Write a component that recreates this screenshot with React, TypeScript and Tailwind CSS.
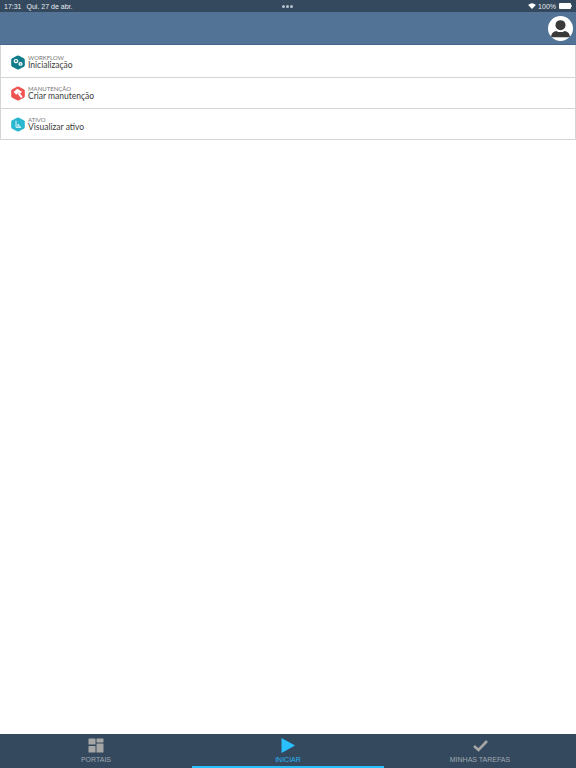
import React from 'react';

const Hex = ({ color, children }: { color: string; children: React.ReactNode }) => (
  <svg width="14" height="15" viewBox="0 0 14 16" preserveAspectRatio="none" className="shrink-0">
    <path d="M6 0.7 Q7 0.2 8 0.7 L12.8 3.4 Q13.8 4 13.8 5 V11 Q13.8 12 12.8 12.6 L8 15.3 Q7 15.8 6 15.3 L1.2 12.6 Q0.2 12 0.2 11 V5 Q0.2 4 1.2 3.4 Z" fill={color} />
    {children}
  </svg>
);

const rows = [
  {
    label: 'WORKFLOW',
    title: 'Inicialização',
    color: '#0f7c8a',
    height: 'h-[33px] pt-[2px]',
    glyph: (
      <g fill="none" stroke="#fff" strokeWidth="1.3">
        <circle cx="5" cy="6.5" r="1.7" />
        <circle cx="9.5" cy="9.5" r="1.4" />
      </g>
    ),
  },
  {
    label: 'MANUTENÇÃO',
    title: 'Criar manutenção',
    color: '#ef5350',
    height: 'h-[31px]',
    glyph: (
      <g fill="#fff">
        <path d="M2.6 6.4 L6.2 3 L11 6.2 L9.6 8 L7.6 6.8 L5.2 9.2 Z" />
        <path d="M6.6 8.2 L8.2 6.9 L11.6 11.4 L10 12.8 Z" />
      </g>
    ),
  },
  {
    label: 'ATIVO',
    title: 'Visualizar ativo',
    color: '#29b6cf',
    height: 'h-[31px]',
    glyph: (
      <g fill="none" stroke="#e6f7fa" strokeWidth="1">
        <path d="M5 4 V11 H10" />
        <path d="M7 11 V7.5 L9.5 11" />
      </g>
    ),
  },
];

export default function App() {
  return (
    <div className="flex flex-col h-[768px] w-[576px] bg-white font-['Lato',sans-serif] overflow-hidden">
      {/* Status bar */}
      <div className="h-[12px] bg-[#34495e] flex items-center justify-between pl-[4px] pr-[4px] text-[#e8ecf0] text-[7px] font-['Liberation_Sans',sans-serif] leading-none relative">
        <div className="flex gap-[5px]">
          <span>17:31</span>
          <span>Qui. 27 de abr.</span>
        </div>
        <div className="absolute left-[282px] top-[5px] flex gap-[1.5px]">
          <span className="w-[2.5px] h-[2.5px] rounded-full bg-[#b8c2cc]" />
          <span className="w-[2.5px] h-[2.5px] rounded-full bg-[#b8c2cc]" />
          <span className="w-[2.5px] h-[2.5px] rounded-full bg-[#b8c2cc]" />
        </div>
        <div className="flex items-center">
          <svg width="8" height="6" viewBox="0 0 18 14">
            <path d="M9 14 L0 4.5 Q9 -3 18 4.5 Z" fill="#fff" />
          </svg>
          <span className="ml-[2px]">100%</span>
          <span className="w-[12px] h-[6px] bg-white rounded-[1px] ml-[3px]" />
          <span className="w-[1px] h-[2px] bg-white/70" />
        </div>
      </div>

      {/* Header */}
      <div className="h-[33px] bg-[#527395] flex items-start justify-end pr-[3px] pt-[4px] border-b border-[#46658a]">
        <div className="w-[25px] h-[25px] rounded-full bg-white overflow-hidden">
          <svg width="25" height="25" viewBox="0 0 26 26">
            <circle cx="13" cy="9.5" r="5.2" fill="#3a3a3a" />
            <path d="M3 22 Q3.5 16.5 8.5 15.5 Q13 18 17.5 15.5 Q22.5 16.5 23 22 Z" fill="#3a3a3a" />
          </svg>
        </div>
      </div>

      {/* List */}
      <div className="border-x border-[#d5d5d5]">
        {rows.map((row) => (
          <div
            key={row.title}
            className={`${row.height} flex items-center pl-[10px] gap-[3px] border-b border-[#d5d5d5]`}
          >
            <Hex color={row.color}>{row.glyph}</Hex>
            <div className="flex flex-col">
              <span className="text-[6px] leading-[6px] text-[#777]">{row.label}</span>
              <span className="text-[8.5px] leading-[9px] text-[#3c3c3c]">{row.title}</span>
            </div>
          </div>
        ))}
      </div>

      <div className="flex-1" />

      {/* Tab bar */}
      <div className="h-[34px] bg-[#34495e] grid grid-cols-3 font-['Liberation_Sans',sans-serif] text-[7px] leading-none">
        <div className="flex flex-col items-center pt-[4px] text-[#a0a8b0]">
          <svg width="16" height="15" viewBox="0 0 16 15" fill="#a6a6a6">
            <rect x="0.5" y="0.5" width="7" height="6" rx="0.6" />
            <rect x="8.5" y="0.5" width="7" height="4" rx="0.6" />
            <rect x="0.5" y="8" width="7" height="6.5" rx="0.6" />
            <rect x="8.5" y="5.5" width="7" height="9" rx="0.6" />
          </svg>
          <span className="mt-[3px]">PORTAIS</span>
        </div>
        <div className="flex flex-col items-center pt-[4px] text-[#29b6f6] relative">
          <svg width="14" height="15" viewBox="0 0 14 15" fill="#29c0ff">
            <path d="M0.5 0 L14 7.5 L0.5 15 Z" />
          </svg>
          <span className="mt-[3px]">INICIAR</span>
          <span className="absolute left-0 right-0 bottom-0 h-[2px] bg-[#29c0ff]" />
        </div>
        <div className="flex flex-col items-center pt-[5px] text-[#a0a8b0]">
          <svg width="15" height="14" viewBox="0 0 15 14" fill="none" stroke="#a6a6a6" strokeWidth="2.6">
            <path d="M1 7 L5.5 11 L14 2" />
          </svg>
          <span className="mt-[3px]">MINHAS TAREFAS</span>
        </div>
      </div>
    </div>
  );
}
